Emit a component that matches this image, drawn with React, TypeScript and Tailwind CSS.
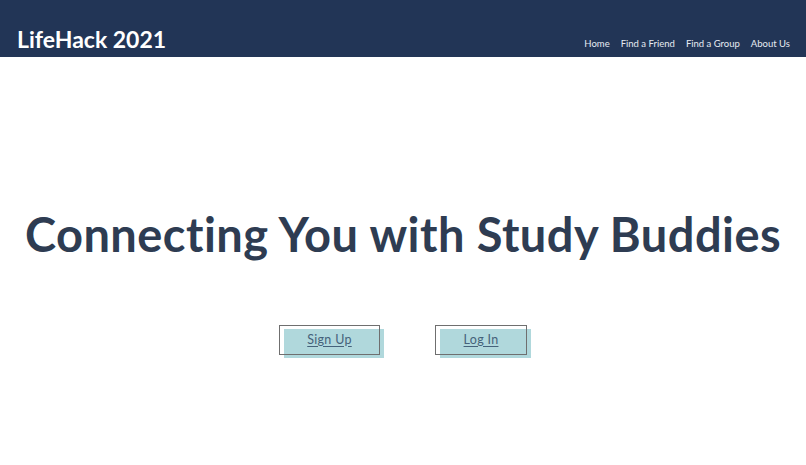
import React from "react";

function Btn({ label, w }: { label: string; w: string }) {
  return (
    <div className={`relative h-[30px] ${w}`}>
      <span className="absolute left-[5px] top-[4px] h-[29px] w-[calc(100%-1px)] bg-[#b0d8dc]" />
      <a
        href="#"
        className="absolute inset-0 flex items-center justify-center border border-[#6f6f6f] text-[12.5px] tracking-[0.3px] text-[#45627a] underline underline-offset-2"
      >
        {label}
      </a>
    </div>
  );
}

export default function App() {
  return (
    <div className="min-h-[465px] w-full bg-white" style={{ fontFamily: "Lato, 'Noto Sans', sans-serif" }}>
      <header className="flex h-[57px] items-end justify-between bg-[#223556] pb-[5px] pl-[17px] pr-[16px]">
        <div className="pb-[1px] text-[23px] font-bold leading-none text-white">LifeHack 2021</div>
        <nav className="flex gap-[11px] pb-[4px] text-[9.5px] leading-none text-[#e6ebf2]">
          <span>Home</span>
          <span>Find a Friend</span>
          <span>Find a Group</span>
          <span>About Us</span>
        </nav>
      </header>
      <main className="flex flex-col items-center pt-[149px]">
        <h1 className="whitespace-nowrap text-[47px] font-bold leading-[56px] tracking-[0.45px] text-[#2e3c52]">
          Connecting You with Study Buddies
        </h1>
        <div className="mt-[63px] flex gap-[55px]">
          <Btn label="Sign Up" w="w-[101px]" />
          <Btn label="Log In" w="w-[92px]" />
        </div>
      </main>
    </div>
  );
}
